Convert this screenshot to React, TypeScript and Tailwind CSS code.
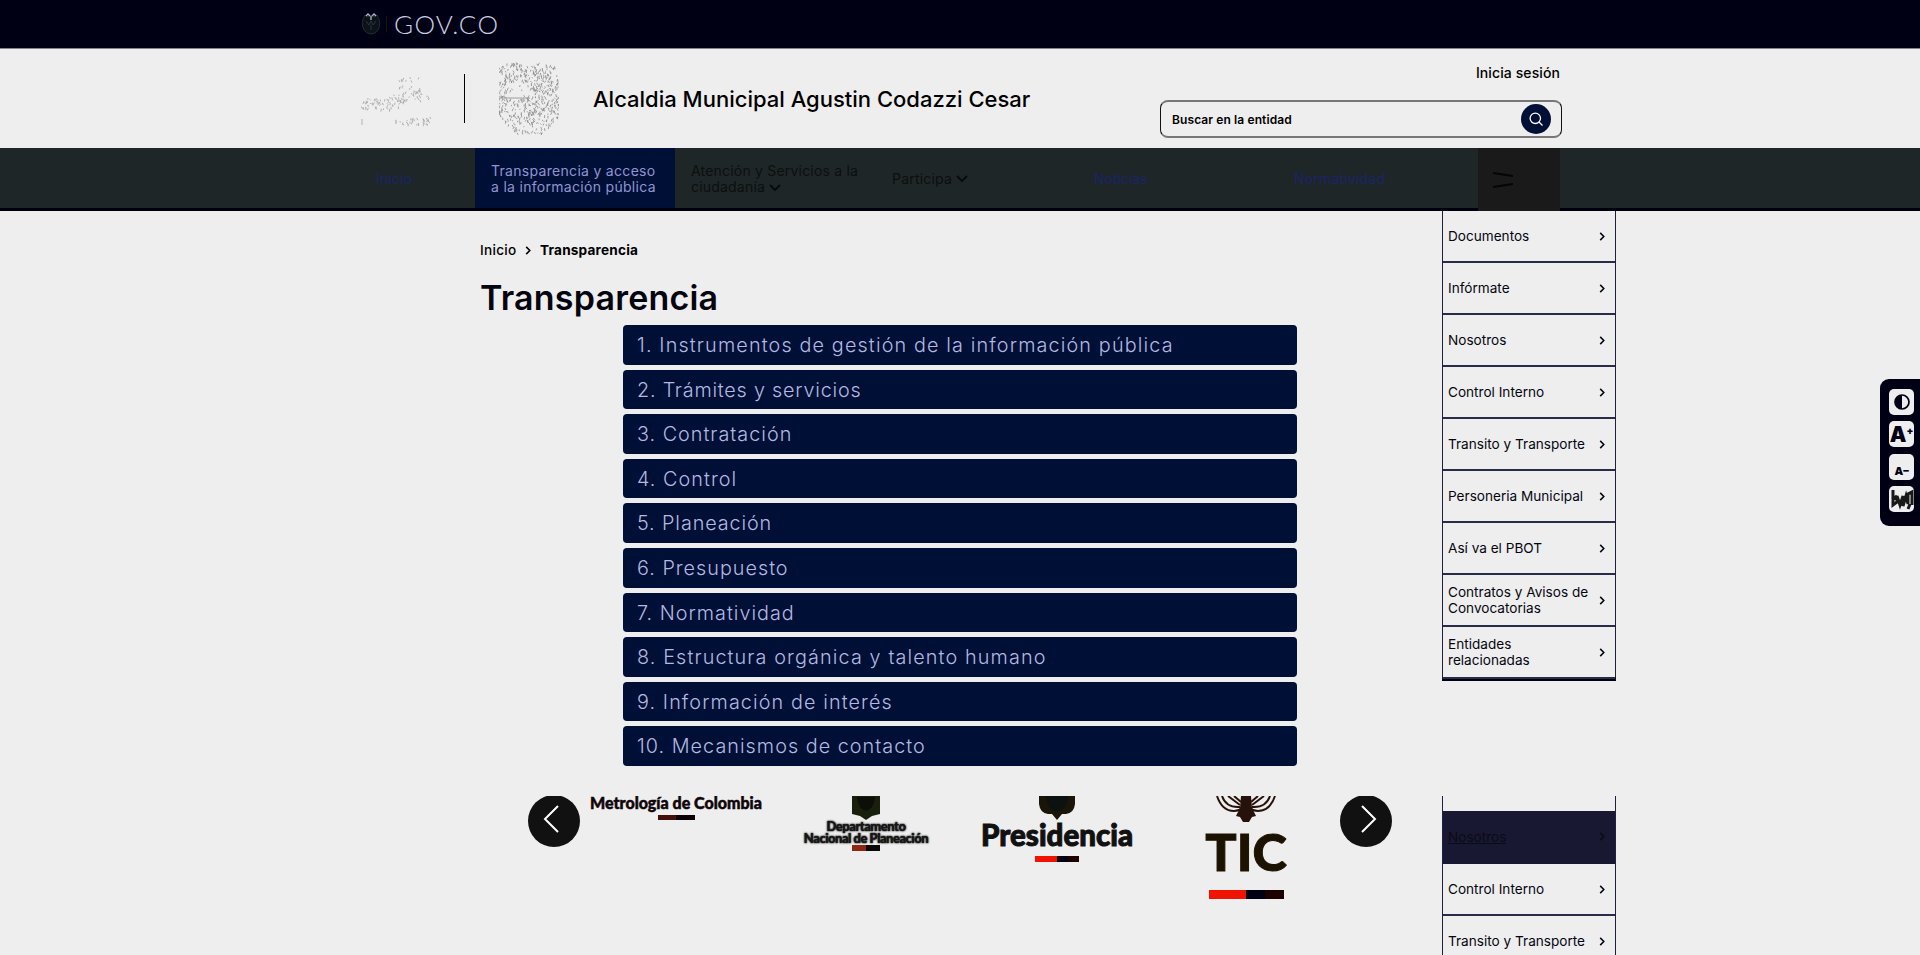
import React from "react";

const topics: [string, string][] = [
  ["1. Instrumentos de gestión de la información pública", "tracking-[1.14px]"],
  ["2. Trámites y servicios", "tracking-[0.78px]"],
  ["3. Contratación", "tracking-[1px]"],
  ["4. Control", "tracking-[1.05px]"],
  ["5. Planeación", "tracking-[0.9px]"],
  ["6. Presupuesto", "tracking-[1px]"],
  ["7. Normatividad", "tracking-[1px]"],
  ["8. Estructura orgánica y talento humano", "tracking-[1.12px]"],
  ["9. Información de interés", "tracking-[1.1px]"],
  ["10. Mecanismos de contacto", "tracking-[1.03px]"],
];

const sideItems = [
  "Documentos",
  "Infórmate",
  "Nosotros",
  "Control Interno",
  "Transito y Transporte",
  "Personeria Municipal",
  "Así va el PBOT",
  "Contratos y Avisos de Convocatorias",
  "Entidades relacionadas",
];

/* Short pen strokes scattered inside a shape; seeded so every render is the same. */
function strokes(count: number, w: number, h: number, seed: number, inside: (x: number, y: number) => boolean) {
  let s = seed;
  const next = () => (s = (s * 16807) % 2147483647) / 2147483647;
  let d = "";
  for (let n = 0; n < count; ) {
    const x = next() * w;
    const y = next() * h;
    if (!inside(x, y)) continue;
    d += `M${x.toFixed(1)} ${y.toFixed(1)}l${(next() * 2.6 - 1.3).toFixed(1)} ${(1 + next() * 2).toFixed(1)}`;
    n++;
  }
  return d;
}

const crest = strokes(520, 60, 72, 91, (x, y) => {
  const top = 5 - 5 * Math.sin((Math.abs(x - 30) / 30) * Math.PI);
  const bottom = x < 16 ? 54 + x : x > 44 ? 54 + (60 - x) : 71;
  const hollow = x > 8 && x < 29 && y > 20 && y < 35 && (x * 7 + y) % 5 > 1;
  return y > top && y < bottom && !hollow;
});
const wordmark =
  strokes(105, 68, 24, 17, (x, y) => y > 13 - (x > 38 && x < 60 ? 13 : x * 0.12) && y < 24 - (x > 44 ? 8 : 0)) +
  strokes(8, 30, 5, 5, () => true).replace(/M([\d.]+) ([\d.]+)/g, (_, x, y) => `M${Number(x) + 38} ${Number(y) - 8}`);
const wordmarkFoot = strokes(34, 38, 9, 23, (x, y) => y > 5 - x * 0.1);

function Chevron() {
  return (
    <svg viewBox="0 0 6 10" className="h-[9px] w-[6px] shrink-0 fill-none stroke-current" strokeWidth="1.7">
      <path d="M1 1l4 4-4 4" />
    </svg>
  );
}

function Down() {
  return (
    <svg viewBox="0 0 12 8" className="ml-1 inline-block h-2 w-3 fill-none stroke-[#070a0a]" strokeWidth="1.8">
      <path d="M1 1l5 5 5-5" />
    </svg>
  );
}

function SideRow({ label, active = false }: { label: string; active?: boolean }) {
  return (
    <div
      className={`flex shrink-0 items-center justify-between border-b-2 pr-[10px] pl-[5px] text-[13.6px] leading-4 ${
        active ? "h-[53px] border-[#181833] bg-[#181833] text-[#0b0b14] underline" : "h-[52px] border-[#282c48] text-[#050510]"
      }`}
    >
      <span className="w-[145px]">{label}</span>
      <Chevron />
    </div>
  );
}

function Flag({ className = "" }: { className?: string }) {
  return (
    <div className={`flex ${className}`}>
      <span className="w-1/2 bg-[#f01400]" />
      <span className="w-1/4 bg-[#000014]" />
      <span className="w-1/4 bg-[#1c0000]" />
    </div>
  );
}

function Topbar() {
  return (
    <div className="flex h-[49px] items-center border-b border-[#85858d] bg-[#000014] pl-[361px]">
      <svg viewBox="0 0 20 24" className="h-6 w-5">
        <path d="M4 3Q-1 11 3 18q3 4 7 4t7-4q4-7-1-15l-3 2-3-2-3 2z" fill="#0b1319" stroke="#222b35" />
        <path d="M5 4l2-2 2 2M11 4l2-2 2 2M10 4v4" fill="none" stroke="#b3b9c8" strokeWidth="1.3" />
        <path d="M5 9l3 4 2-4 2 4 3-4M10 13v5" fill="none" stroke="#2c3540" />
      </svg>
      <span className="ml-[5px] h-4 w-px bg-[#12180f]" />
      <span className="ml-[7px] font-[Lato,sans-serif] text-[26px] font-light tracking-[1.3px] text-[#c9cee6]">GOV.CO</span>
    </div>
  );
}

function Header() {
  return (
    <header className="flex h-[99px] pl-[360px]">
      <svg viewBox="0 -10 76 66" className="mt-[12px] h-[66px] w-[76px] fill-none stroke-[#a9a9a9]" strokeWidth="0.9">
        <path d={wordmark} transform="translate(1 14)" />
        <path d={wordmarkFoot} transform="translate(33 44)" />
        <path d="M2 48v6" />
      </svg>
      <span className="mt-[25px] ml-[28px] h-[49px] w-px bg-black" />
      <svg viewBox="0 0 60 74" className="mt-[13px] ml-[34px] h-[74px] w-[60px] fill-none stroke-[#8c8c8c]" strokeWidth="0.8">
        <path d={crest} />
        <path d="M5 36h26" />
      </svg>
      <h1 className="mt-[34px] ml-[34px] w-[436px] text-[22px] leading-8 font-medium whitespace-nowrap text-black">
        Alcaldia Municipal Agustin Codazzi Cesar
      </h1>
      <div className="ml-[131px] flex w-[402px] flex-col items-end">
        <span className="mt-[14px] mr-[2px] text-[14px] leading-5 font-medium tracking-[0.1px] text-black">Inicia sesión</span>
        <div className="mt-[17px] flex h-[38px] w-[402px] items-center justify-between rounded-[8px] border-x border-y-2 border-x-[#111] border-y-[#777] pr-[10px] pl-[11px]">
          <span className="pt-px text-[12px] font-semibold tracking-[0.1px] text-black">Buscar en la entidad</span>
          <span className="flex size-[30px] items-center justify-center rounded-full bg-[#000f35]">
            <svg viewBox="0 0 16 16" className="size-4 fill-none stroke-white" strokeWidth="1.3">
              <circle cx="7.3" cy="7.3" r="5.2" />
              <path d="M11 11l3.5 3.5" />
            </svg>
          </span>
        </div>
      </div>
    </header>
  );
}

function Nav() {
  return (
    <nav className="flex h-[63px] border-b-[3px] border-[#00000f] bg-[#1f2627] pl-[360px] text-[14px] leading-4 text-[#0b0f0f]">
      <div className="flex w-[115px] items-center pt-[2px] pl-4 tracking-[0.2px] text-[#1a2468]">Inicio</div>
      <div className="flex w-[200px] items-center bg-[#000f35] pt-[2px] pl-4 tracking-[0.3px] text-[#8f95d2]">
        <span className="whitespace-nowrap">Transparencia y acceso<br />a la información pública</span>
      </div>
      <div className="flex w-[201px] items-center pt-[2px] pl-4 tracking-[0.2px]">
        <span className="whitespace-nowrap">Atención y Servicios a la<br />ciudadanía<Down /></span>
      </div>
      <div className="flex w-[201px] items-center pt-[2px] pl-4 tracking-[0.2px]">Participa<Down /></div>
      <div className="flex w-[201px] items-center pt-[2px] pl-[17px] text-[#1a2468]">Noticias</div>
      <div className="flex w-[200px] items-center pt-[2px] pl-4 tracking-[0.2px] text-[#1a2468]">Normatividad</div>
      <div className="-mb-[3px] flex w-[82px] items-center bg-[#1b1a1a] pl-[15px]">
        <svg viewBox="0 0 20 18" className="h-[18px] w-5 fill-none stroke-[#050505]" strokeWidth="2">
          <path d="M0 2l20 3M0 16l20-3" />
        </svg>
      </div>
    </nav>
  );
}

function Breadcrumb() {
  return (
    <div className="flex items-center pt-[29px] text-[13.6px] leading-5 text-black">
      <span className="w-[45px] font-medium tracking-[0.3px]">Inicio</span>
      <Chevron />
      <b className="ml-[9px] tracking-[0.2px]">Transparencia</b>
    </div>
  );
}

function Carousel() {
  return (
    <div className="flex h-[110px] overflow-hidden pl-[48px]">
      <div className="-mt-[1px] flex size-[52px] items-center justify-center rounded-full bg-[#111]">
        <svg viewBox="0 0 16 28" className="mr-[6px] mb-1 h-7 w-4 fill-none stroke-white" strokeWidth="2"><path d="M15 1L2 14l13 13" /></svg>
      </div>
      <div className="ml-[10px] flex w-[172px] flex-col items-center font-[Lato,sans-serif]">
        <span className="-mt-px text-[16px] leading-4 font-black whitespace-nowrap text-[#100508] [-webkit-text-stroke:0.5px_#100508]">Metrología de Colombia</span>
        <div className="mt-[4px] flex h-[5px] w-[37px]"><span className="w-1/2 bg-[#421008]" /><span className="w-1/2 bg-[#0c0006]" /></div>
      </div>
      <div className="ml-[43px] flex w-[122px] flex-col items-center font-[Lato,sans-serif]">
        <svg viewBox="0 0 28 24" className="h-6 w-7"><path d="M0 0h28v18l-8 2-6 4-6-4-8-2z" fill="#18200c" /><path d="M5 1q1 12 9 14 8-2 9-14" fill="#0c0f08" /></svg>
        <span className="text-center text-[13px] leading-3 font-black tracking-[-0.5px] whitespace-nowrap text-[#161616] [text-shadow:0_0_1px_#222,0_0_2px_#555,0_0_2px_#555]">Departamento<br />Nacional de Planeación</span>
        <div className="mt-px flex h-[6px] w-7"><span className="w-1/2 bg-[#8a2814]" /><span className="w-1/2 bg-[#0d0808]" /></div>
      </div>
      <div className="ml-[54px] flex w-[152px] flex-col items-center font-[Lato,sans-serif]">
        <svg viewBox="0 0 36 24" className="h-6 w-9"><path d="M0 0h36v8q-1 9-9 10h-4l-5 6-5-6H9Q1 17 0 8z" fill="#1a1508" /><path d="M7 0q1 14 11 16Q28 14 29 0z" fill="#0c1210" /></svg>
        <span className="-mt-px text-[29.5px] leading-[31px] font-black whitespace-nowrap text-[#111] [-webkit-text-stroke:1px_#111]">Presidencia</span>
        <Flag className="mt-[6px] h-[6px] w-11" />
      </div>
      <div className="ml-[73px] flex w-[80px] flex-col items-center font-[Lato,sans-serif]">
        <svg viewBox="0 0 60 27" className="h-[27px] w-[60px]" fill="none" stroke="#26120a" strokeWidth="2">
          <path d="M1 0q5 15 17 15 5 0 8-3M59 0q-5 15-17 15-5 0-8-3M6 0q4 12 18 11M54 0q-4 12-18 11M12 0l12 9M48 0l-12 9M18 0l7 6M42 0l-7 6" />
          <path d="M25 0h10l1 12 4 8-4 1-3 5h-6l-3-5-4-1 4-8z" fill="#26120a" stroke="none" />
        </svg>
        <span className="mt-[4px] text-[52px] leading-[48px] font-black text-[#1c1200] [-webkit-text-stroke:1px_#1c1200]">TIC</span>
        <Flag className="mt-[15px] h-[9px] w-[75px]" />
      </div>
      <div className="-mt-[1px] ml-[54px] flex size-[52px] items-center justify-center rounded-full bg-[#111]">
        <svg viewBox="0 0 16 28" className="mb-1 ml-[6px] h-7 w-4 fill-none stroke-white" strokeWidth="2"><path d="M1 1l13 13L1 27" /></svg>
      </div>
    </div>
  );
}

function AccessBar() {
  const tile = "flex h-[26px] w-[25px] items-center justify-center rounded-[5px] bg-[#eee] text-[#000014]";
  return (
    <aside className="absolute top-[379px] right-0 flex h-[147px] w-10 flex-col items-start gap-[6px] rounded-l-[9px] bg-[#000014] pt-[10px] pl-[9px]">
      <div className={tile}>
        <svg viewBox="0 0 16 16" className="size-4"><circle cx="8" cy="8" r="7" fill="none" stroke="currentColor" strokeWidth="1.7" /><path d="M8 1a7 7 0 000 14z" fill="currentColor" /></svg>
      </div>
      <div className={tile}><span className="text-[21px] leading-none font-black">A</span><span className="-mt-2 text-[10px] leading-none font-black">+</span></div>
      <div className={`${tile} mt-px`}><span className="mt-2 text-[11px] leading-none font-black">A</span><span className="mt-[7px] text-[11px] leading-none font-black">–</span></div>
      <div className={tile}>
        <svg viewBox="0 0 24 24" className="size-6 fill-none stroke-[#181818]" strokeWidth="3"><path d="M3 3v15l4-3V9l3 9 3-9v10l3-10 2 8V7l4-2v13M2 13l5-4M20 17l-2 5" /></svg>
      </div>
    </aside>
  );
}

export default function App() {
  return (
    <div className="relative h-[955px] w-full overflow-hidden bg-[#eeeeee] font-[Inter,sans-serif]">
      <Topbar />
      <Header />
      <Nav />
      <div className="flex">
        <main className="box-content w-[962px] pl-[480px]">
          <Breadcrumb />
          <h2 className="mt-[14px] text-[34px] leading-[48px] font-semibold tracking-[0.2px] text-[#050510]">Transparencia</h2>
          <div className="mt-[3px] ml-[143px] flex w-[674px] flex-col gap-[5px]">
            {topics.map(([t, tracking]) => (
              <div key={t} className={`flex h-[39.6px] items-center rounded-[4px] bg-[#000f35] pt-[2px] pl-[14px] text-[19.8px] font-light text-[#b3b9e0] ${tracking}`}>
                {t}
              </div>
            ))}
          </div>
          <div className="mt-[30px]"><Carousel /></div>
        </main>
        <div className="flex w-[174px] flex-col">
          <div className="flex h-[470px] flex-col border-x border-b-[4px] border-x-[#1d2140] border-b-[#000014]">
            {sideItems.map((t) => <SideRow key={t} label={t} />)}
          </div>
          <div className="mt-[115px] flex h-[170px] flex-col overflow-hidden border-x border-[#1d2140] pt-[15px]">
            <SideRow label="Nosotros" active />
            <SideRow label="Control Interno" />
            <SideRow label="Transito y Transporte" />
          </div>
        </div>
      </div>
      <AccessBar />
    </div>
  );
}
